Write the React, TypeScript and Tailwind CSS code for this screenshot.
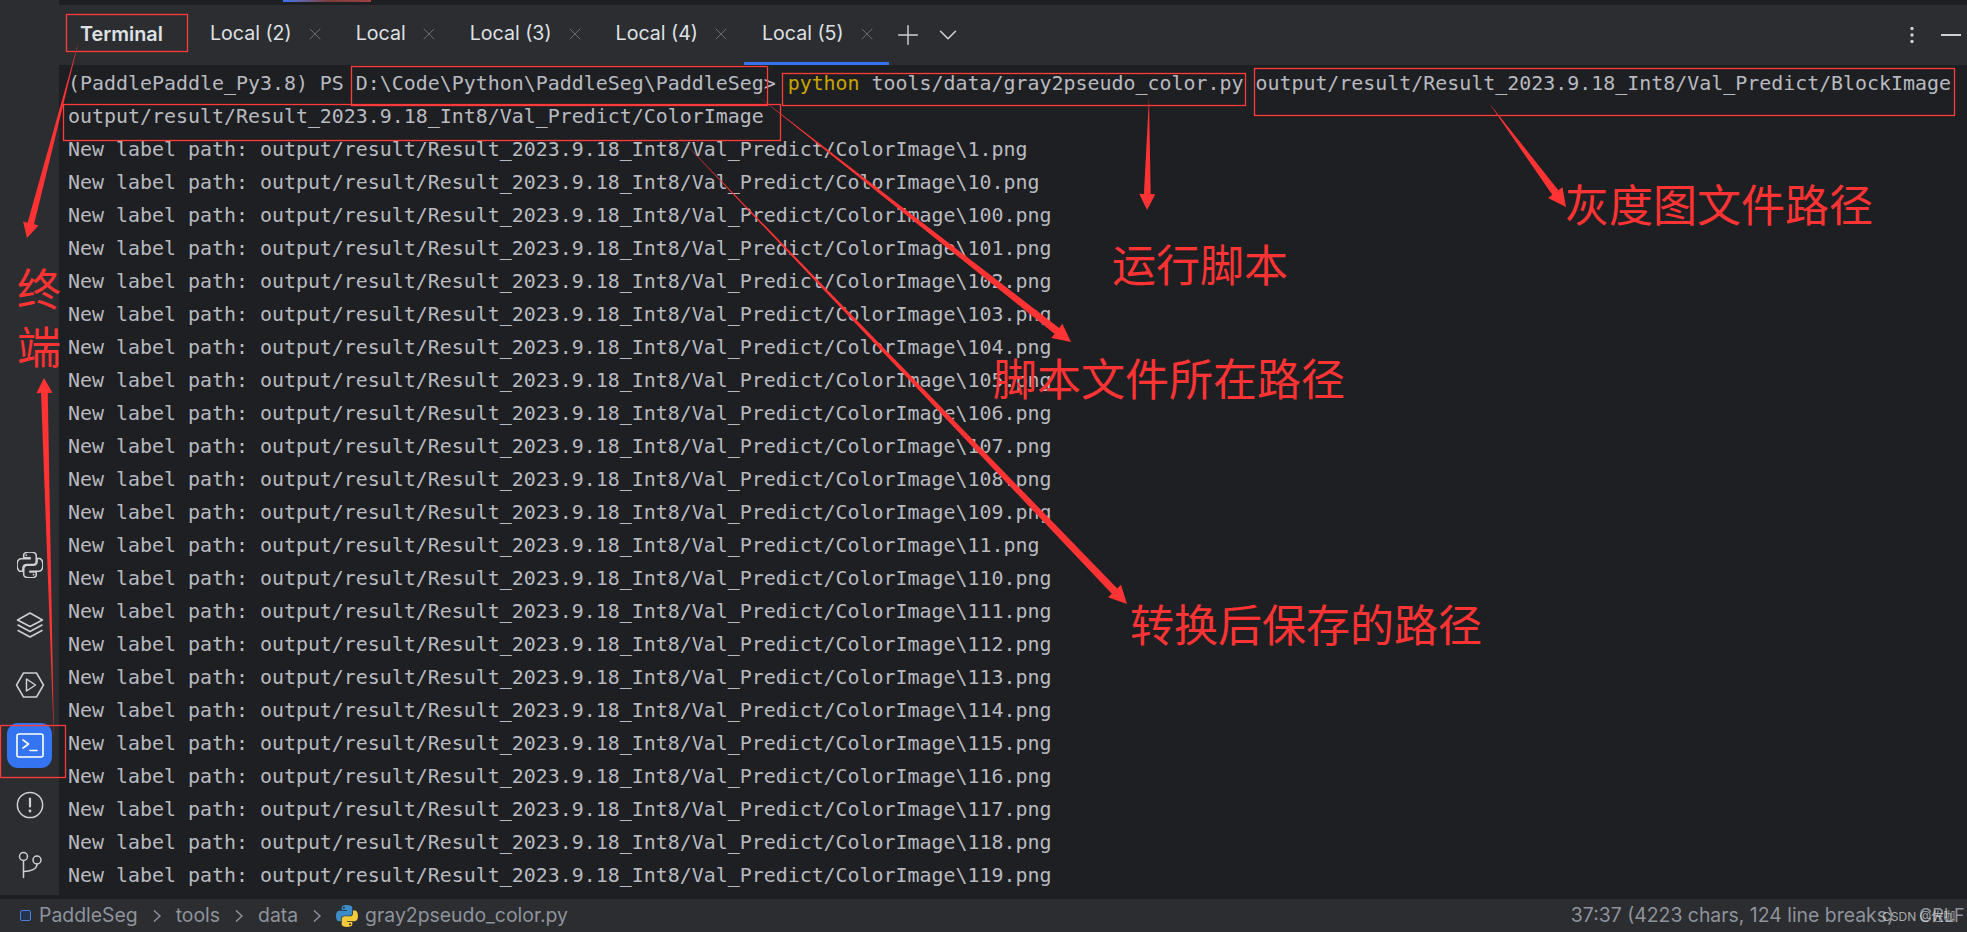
import { ChevronDown, Plus, X } from "lucide-react";

const PY_TOP =
  "M126.916.072c-64.832 0-60.784 28.115-60.784 28.115l.072 29.128h61.868v8.745H41.631S.145 61.355.145 126.77c0 65.417 36.21 63.097 36.21 63.097h21.61v-30.356s-1.165-36.21 35.632-36.21h61.362s34.475.557 34.475-33.319V33.97S194.67.072 126.916.072z";
const PY_BOTTOM =
  "M128.757 254.126c64.832 0 60.784-28.115 60.784-28.115l-.072-29.127H127.6v-8.745h86.441s41.486 4.705 41.486-60.712c0-65.416-36.21-63.096-36.21-63.096h-21.61v30.355s1.165 36.21-35.632 36.21h-61.362s-34.475-.557-34.475 33.32v56.013s-5.235 33.897 62.518 33.897z";

const BASE = "New label path: output/result/Result_2023.9.18_Int8/Val_Predict/ColorImage\\";
const FILES = [
  "1", "10", "100", "101", "102", "103", "104", "105", "106", "107", "108", "109",
  "11", "110", "111", "112", "113", "114", "115", "116", "117", "118", "119",
];

// red boxes drawn on the screenshot: x, y, w, h
const BOXES = [
  [66, 14, 121, 37],
  [351, 66, 416, 39],
  [63, 104, 717, 36],
  [782, 73, 463, 32],
  [1254, 68, 700, 47],
  [0, 725, 65, 52],
];

// tapered arrows: start, tip, head half width, head length
const ARROWS = [
  [79, 40, 27, 238, 8, 15],
  [54, 742, 44, 378, 8, 15],
  [1149, 97, 1147, 210, 8, 16],
  [754, 93, 1071, 342, 9, 18],
  [674, 132, 1127, 604, 9, 18],
  [1489, 103, 1566, 207, 9, 18],
];

function arrowPoints([x1, y1, x2, y2, head, len]: number[]) {
  const d = Math.hypot(x2 - x1, y2 - y1);
  const ux = (x2 - x1) / d;
  const uy = (y2 - y1) / d;
  const nx = -uy;
  const ny = ux;
  const bx = x2 - ux * len;
  const by = y2 - uy * len;
  const neck = head * 0.42;
  const pts = [
    [x1, y1],
    [bx + nx * neck, by + ny * neck],
    [bx + nx * head, by + ny * head],
    [x2, y2],
    [bx - nx * head, by - ny * head],
    [bx - nx * neck, by - ny * neck],
  ];
  return pts.map((p) => p.join(",")).join(" ");
}

function Tab({ label, active }: { label: string; active?: boolean }) {
  return (
    <div
      className={`flex h-full items-center gap-[13px] pl-[18px] pr-[12px] pt-[1px] ${
        active ? "border-b-[3px] border-[#3574f0]" : "border-b-[3px] border-transparent"
      }`}
    >
      <span className="text-[#dfe1e5]">{label}</span>
      <X size={20} strokeWidth={1.1} className="text-[#6f737a]" />
    </div>
  );
}

function SideIcon({ children }: { children: React.ReactNode }) {
  return <div className="flex h-[60px] w-[59px] items-center justify-center">{children}</div>;
}

const stroke = {
  fill: "none",
  stroke: "#ced0d6",
  strokeWidth: 1.5,
  strokeLinecap: "round" as const,
  strokeLinejoin: "round" as const,
};

function Sidebar() {
  return (
    <aside className="flex h-[895px] w-[59px] flex-none flex-col justify-end bg-[#2b2d30]">
      <SideIcon>
        <svg width="26" height="26" viewBox="0 0 256 255" fill="none" stroke="#ced0d6" strokeWidth="15">
          <path d={PY_TOP} />
          <path d={PY_BOTTOM} />
          <circle cx="92" cy="31" r="9" fill="#ced0d6" stroke="none" />
          <circle cx="163" cy="223" r="9" fill="#ced0d6" stroke="none" />
        </svg>
      </SideIcon>
      <SideIcon>
        <svg width="28" height="28" viewBox="0 0 28 28" {...stroke}>
          <path d="M14 2 L26.5 9 L14 15.5 L1.5 9 Z" />
          <path d="M2 14 L14 20.5 L26 14" />
          <path d="M2 19.5 L14 26 L26 19.5" />
        </svg>
      </SideIcon>
      <SideIcon>
        <svg width="30" height="28" viewBox="0 0 30 28" {...stroke}>
          <path d="M8.5 2 H21.5 L28.5 14 L21.5 26 H8.5 L1.5 14 Z" />
          <path d="M11.5 8 L20.5 14 L11.5 20 Z" />
        </svg>
      </SideIcon>
      <SideIcon>
        <div className="flex h-[45px] w-[45px] items-center justify-center rounded-[11px] bg-[#3574f0]">
          <svg width="28" height="25" viewBox="0 0 28 25" fill="none" stroke="#ffffff" strokeWidth="1.6" strokeLinecap="round" strokeLinejoin="round">
            <rect x="1" y="1" width="26" height="23" rx="2" />
            <path d="M7 7 L12.5 11 L7 15" />
            <path d="M14 17.5 H21" />
          </svg>
        </div>
      </SideIcon>
      <SideIcon>
        <svg width="28" height="28" viewBox="0 0 28 28" {...stroke}>
          <circle cx="14" cy="14" r="12.6" />
          <path d="M14 7.5 V15.5" strokeWidth="2.2" />
          <circle cx="14" cy="20" r="1.4" fill="#ced0d6" stroke="none" />
        </svg>
      </SideIcon>
      <SideIcon>
        <svg width="26" height="28" viewBox="0 0 26 28" {...stroke}>
          <circle cx="6.5" cy="5.5" r="4" />
          <circle cx="20" cy="9" r="4" />
          <path d="M6.5 9.5 V26.5" />
          <path d="M20 13 C20 18 14 20.5 6.5 20.5" />
        </svg>
      </SideIcon>
    </aside>
  );
}

function TabBar() {
  return (
    <div className="flex h-[60px] flex-none items-center bg-[#2b2d30] pl-[21px] pr-[6px] font-['Inter',sans-serif] text-[19.6px]">
      <span className="mr-[26px] w-[86px] whitespace-nowrap text-[19.8px] font-semibold text-[#dfe1e5]">Terminal</span>
      <div className="flex h-full items-center gap-[1px]">
        <Tab label="Local (2)" />
        <Tab label="Local" />
        <Tab label="Local (3)" />
        <Tab label="Local (4)" />
        <Tab label="Local (5)" active />
      </div>
      <Plus size={32} strokeWidth={1.1} className="ml-[3px] text-[#ced0d6]" />
      <ChevronDown size={30} strokeWidth={1.3} className="ml-[9px] text-[#ced0d6]" />
      <div className="flex-1" />
      <svg width="6" height="18" viewBox="0 0 6 18" fill="#ced0d6" className="mr-[26px]">
        <circle cx="3" cy="2.5" r="1.7" />
        <circle cx="3" cy="9" r="1.7" />
        <circle cx="3" cy="15.5" r="1.7" />
      </svg>
      <div className="h-[2px] w-[20px] bg-[#ced0d6]" />
    </div>
  );
}

function Console() {
  return (
    <div className="min-h-0 flex-1 overflow-hidden pl-[9px] pt-[2px] font-['DejaVu_Sans_Mono',monospace] text-[19.93px] leading-[33px] text-[#b8bac0]">
      <div className="whitespace-pre">
        {"(PaddlePaddle_Py3.8) PS D:\\Code\\Python\\PaddleSeg\\PaddleSeg> "}
        <span className="text-[#c9a400]">python</span>
        {" tools/data/gray2pseudo_color.py output/result/Result_2023.9.18_Int8/Val_Predict/BlockImage"}
      </div>
      <div className="whitespace-pre">output/result/Result_2023.9.18_Int8/Val_Predict/ColorImage</div>
      {FILES.map((f) => (
        <div key={f} className="whitespace-pre">
          {BASE + f + ".png"}
        </div>
      ))}
    </div>
  );
}

function Crumb({ children }: { children: React.ReactNode }) {
  return <span className="text-[#8f939c]">{children}</span>;
}

function Sep() {
  return (
    <svg width="10" height="14" viewBox="0 0 10 14" fill="none" stroke="#8f939c" strokeWidth="1.4" className="mx-[14px]">
      <path d="M2 1.5 L8 7 L2 12.5" />
    </svg>
  );
}

function StatusBar() {
  return (
    <footer className="flex h-[35px] flex-none items-center border-t-[2px] border-[#1e1f22] bg-[#2b2d30] pl-[20px] font-['Inter',sans-serif] text-[19.4px]">
      <div className="mr-[8px] h-[11px] w-[11px] rounded-[2px] border-[1.5px] border-[#4a7fe0] bg-[#25324d]" />
      <Crumb>PaddleSeg</Crumb>
      <Sep />
      <Crumb>tools</Crumb>
      <Sep />
      <Crumb>data</Crumb>
      <Sep />
      <svg width="22" height="22" viewBox="0 0 256 255" className="mr-[7px]">
        <path d={PY_TOP} fill="#3c8cc8" />
        <path d={PY_BOTTOM} fill="#f4c93c" />
        <circle cx="92" cy="31" r="11" fill="#2b2d30" />
        <circle cx="163" cy="223" r="11" fill="#2b2d30" />
      </svg>
      <Crumb>gray2pseudo_color.py</Crumb>
      <div className="flex-1" />
      <span className="whitespace-pre text-[#8f939c]">37:37 (4223 chars, 124 line breaks)</span>
      <span className="ml-[25px] w-[48px] whitespace-nowrap text-[18px] text-[#8f939c]">CRLF</span>
    </footer>
  );
}

function Annotations() {
  return (
    <div className="pointer-events-none absolute inset-0 font-['Noto_Sans_CJK_SC',sans-serif] text-[44px] leading-[44px] text-[#ff3333]">
      <svg width="1967" height="932" className="absolute left-0 top-0">
        {BOXES.map(([x, y, w, h]) => (
          <rect key={`${x}-${y}`} x={x + 0.5} y={y + 0.5} width={w} height={h} fill="none" stroke="#ff3b3b" strokeWidth="1.3" />
        ))}
        {ARROWS.map((a) => (
          <polygon key={a.join()} points={arrowPoints(a)} fill="#ff3333" />
        ))}
      </svg>
      <span className="absolute left-[1112px] top-[241px]">运行脚本</span>
      <span className="absolute left-[993px] top-[355px]">脚本文件所在路径</span>
      <span className="absolute left-[1130px] top-[601px]">转换后保存的路径</span>
      <span className="absolute left-[1565px] top-[181px]">灰度图文件路径</span>
      <span className="absolute left-[17px] top-[258px] w-[44px] leading-[58px]">终端</span>
      <span className="absolute left-[1882px] top-[908px] whitespace-nowrap font-['Inter','Noto_Sans_CJK_SC',sans-serif] text-[12px] leading-[18px] text-white/60">
        CSDN @佐咖
      </span>
    </div>
  );
}

export default function App() {
  return (
    <div className="relative flex h-[932px] w-[1967px] flex-col overflow-hidden bg-[#1e1f22]">
      <div className="flex min-h-0 flex-1">
        <Sidebar />
        <main className="flex min-w-0 flex-1 flex-col">
          <div className="h-[5px] flex-none overflow-hidden bg-[#1e1f22] pl-[224px]">
            <div className="h-[2px] w-[88px] bg-gradient-to-r from-[#3574f0] via-[#7a3b3b] to-[#a04040]" />
          </div>
          <TabBar />
          <Console />
        </main>
      </div>
      <StatusBar />
      <Annotations />
    </div>
  );
}
